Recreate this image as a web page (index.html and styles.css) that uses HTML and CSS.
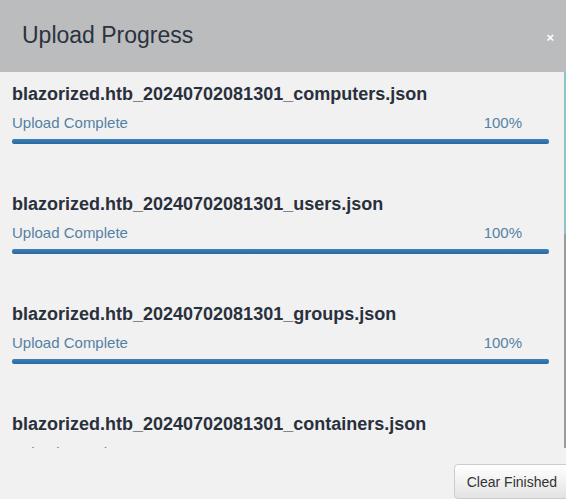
FILE: index.html
```html
<!DOCTYPE html>
<html>
<head>
<meta charset="utf-8">
<link rel="stylesheet" href="styles.css">
</head>
<body>
<div class="modal">
  <div class="modal-header">
    <h3 class="modal-title">Upload Progress</h3>
    <span class="close">&times;</span>
  </div>
  <div class="modal-body">
    <div class="upload-list">
      <div class="upload-item">
        <h4 class="file-name">blazorized.htb_20240702081301_computers.json</h4>
        <div class="status-row"><span>Upload Complete</span><span>100%</span></div>
        <div class="progress"><div class="progress-bar" style="width:100%"></div></div>
      </div>
      <div class="upload-item">
        <h4 class="file-name">blazorized.htb_20240702081301_users.json</h4>
        <div class="status-row"><span>Upload Complete</span><span>100%</span></div>
        <div class="progress"><div class="progress-bar" style="width:100%"></div></div>
      </div>
      <div class="upload-item">
        <h4 class="file-name">blazorized.htb_20240702081301_groups.json</h4>
        <div class="status-row"><span>Upload Complete</span><span>100%</span></div>
        <div class="progress"><div class="progress-bar" style="width:100%"></div></div>
      </div>
      <div class="upload-item">
        <h4 class="file-name">blazorized.htb_20240702081301_containers.json</h4>
        <div class="status-row"><span>Upload Complete</span><span>100%</span></div>
        <div class="progress"><div class="progress-bar" style="width:100%"></div></div>
      </div>
    </div>
    <div class="scrollbar"><div class="scroll-thumb"></div></div>
  </div>
  <div class="modal-footer">
    <button class="btn">Clear Finished</button>
  </div>
</div>
</body>
</html>
```

FILE: styles.css
```css
* { box-sizing: border-box; }
html, body {
  margin: 0;
  padding: 0;
  width: 566px;
  height: 499px;
  overflow: hidden;
  background: #f1f1f1;
  font-family: "Liberation Sans", Arial, sans-serif;
}
.modal {
  display: flex;
  flex-direction: column;
  width: 566px;
  height: 499px;
}
.modal-header {
  height: 72px;
  background: #bbbcbd;
  display: flex;
  align-items: center;
  justify-content: space-between;
  padding: 0 12px 0 22px;
}
.modal-title {
  margin: 0;
  font-weight: normal;
  font-size: 23px;
  line-height: 26px;
  color: #2a3340;
  position: relative;
  top: -1px;
}
.close {
  color: #ffffff;
  font-weight: bold;
  font-size: 13px;
  line-height: 13px;
  margin-top: 3px;
}
.modal-body {
  height: 378px;
  display: flex;
  overflow: hidden;
}
.upload-list {
  flex: 1;
  padding-top: 12px;
  display: flex;
  flex-direction: column;
  gap: 50px;
  overflow: hidden;
}
.upload-item {
  padding: 0 15px 0 12px;
  flex-shrink: 0;
}
.file-name {
  margin: 0 0 9px;
  font-size: 18px;
  line-height: 20px;
  font-weight: bold;
  color: #29303c;
}
.status-row {
  display: flex;
  justify-content: space-between;
  font-size: 15px;
  line-height: 20px;
  color: #5581a4;
  padding-right: 27px;
  margin-bottom: 6px;
}
.progress {
  height: 5px;
  background: #e0e0e0;
  border-radius: 2px;
  overflow: hidden;
}
.progress-bar {
  height: 100%;
  background: linear-gradient(to bottom, #3b80bb, #2c69a0);
}
.scrollbar {
  width: 2px;
  background: #9b9b9b;
  flex-shrink: 0;
}
.scroll-thumb {
  height: 162px;
  background: #8dc3c6;
}
.modal-footer {
  flex: 1;
  display: flex;
  justify-content: flex-end;
  align-items: flex-start;
  padding-top: 16px;
}
.btn {
  flex-shrink: 0;
  margin-right: -4px;
  font-family: "Liberation Sans", Arial, sans-serif;
  font-size: 14px;
  line-height: 20px;
  padding: 7px 12px 6px 12px;
  color: #333333;
  background: linear-gradient(to bottom, #ffffff, #e3e3e3);
  border: 1px solid #cccccc;
  border-radius: 4px;
}
```
